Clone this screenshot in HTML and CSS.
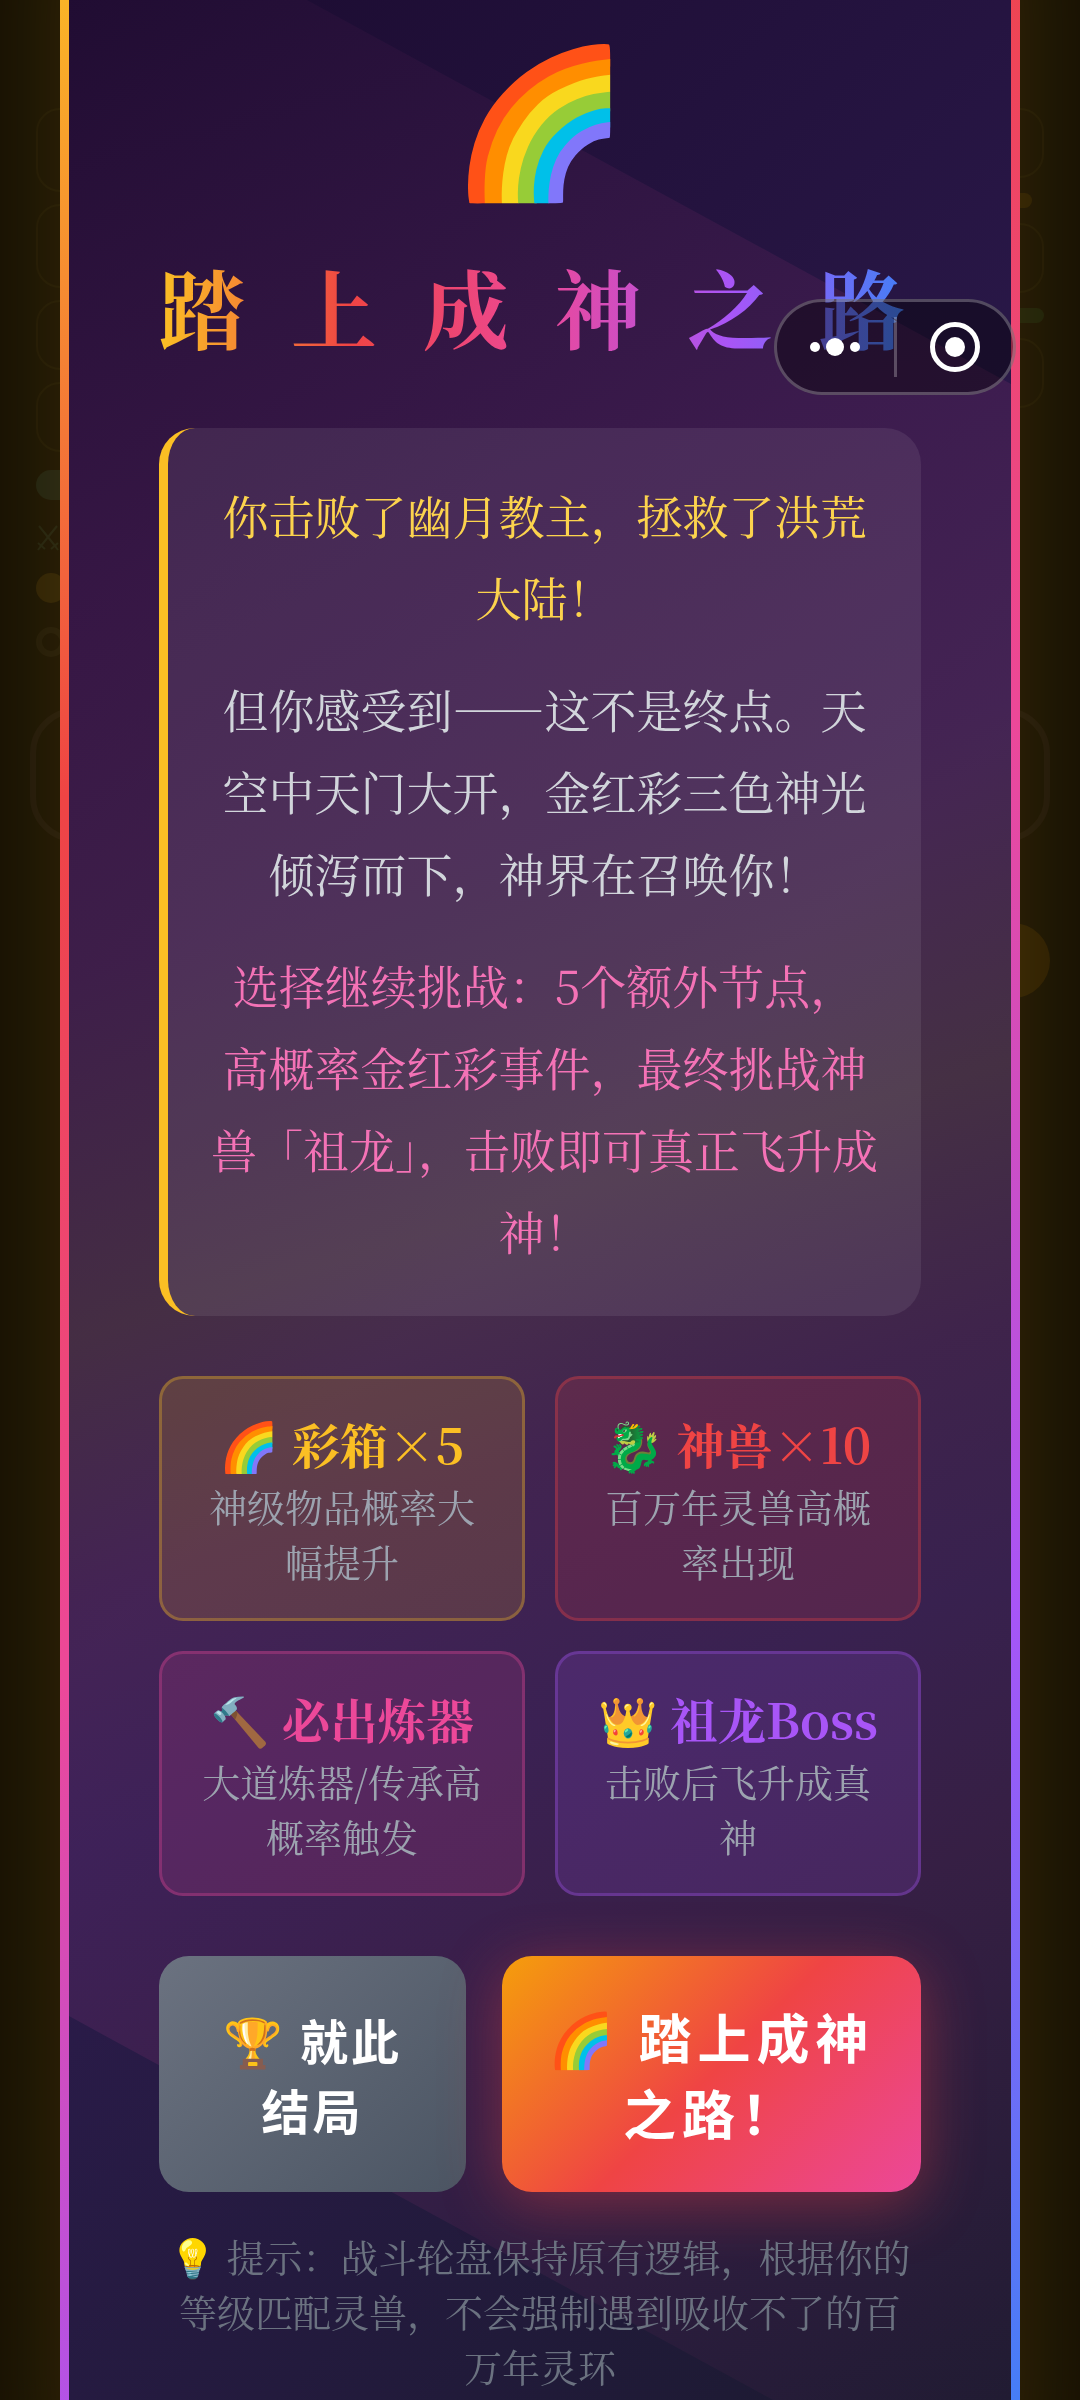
FILE: index.html
```html
<!DOCTYPE html>
<html lang="zh-CN">
<head>
    <meta charset="UTF-8">
    <meta name="viewport" content="width=device-width, initial-scale=1.0">
    <title>踏上成神之路</title>
    <link rel="stylesheet" href="styles.css">
</head>
<body>
<!-- 背景场景 -->
<div class="scene">
    <div class="scene-row">
        <div class="scene-col">
            <div class="slot slot-lg"></div>
            <div class="slot slot-lg"></div>
            <div class="slot"></div>
            <div class="slot"></div>
            <div class="dot dot-green"></div>
            <div class="swords">
                <svg viewBox="0 0 24 28" fill="none" stroke="currentColor" stroke-width="2">
                    <path d="M3 2l17 21M21 2L4 23M2 19l7 6M22 19l-7 6M5 22l-3 4M19 22l3 4"/>
                </svg>
            </div>
            <div class="dot dot-gold"></div>
            <div class="dot dot-ring"></div>
        </div>
        <div class="scene-col scene-right">
            <div class="slot"></div>
            <div class="bar bar-gold"></div>
            <div class="slot"></div>
            <div class="bar bar-green"></div>
            <div class="slot"></div>
        </div>
    </div>
    <div class="scene-card"></div>
    <div class="scene-ball"></div>
</div>

<!-- 弹窗 -->
<div class="overlay">
    <div class="modal">
        <div class="modal-icon">🌈</div>
        <h1 class="modal-title">踏上成神之路</h1>

        <div class="story">
            <p class="story-gold">你击败了幽月教主，拯救了洪荒大陆！</p>
            <p class="story-plain">但你感受到——这不是终点。天空中天门大开，金红彩三色神光倾泻而下，神界在召唤你！</p>
            <p class="story-pink">选择继续挑战：5个额外节点，高概率金红彩事件，最终挑战神兽「祖龙」，击败即可真正飞升成神！</p>
        </div>

        <div class="features">
            <div class="feature feature-gold">
                <h3>🌈 彩箱×5</h3>
                <p>神级物品概率大幅提升</p>
            </div>
            <div class="feature feature-red">
                <h3>🐉 神兽×10</h3>
                <p>百万年灵兽高概率出现</p>
            </div>
            <div class="feature feature-pink">
                <h3>🔨 必出炼器</h3>
                <p>大道炼器/传承高概率触发</p>
            </div>
            <div class="feature feature-purple">
                <h3>👑 祖龙Boss</h3>
                <p>击败后飞升成真神</p>
            </div>
        </div>

        <div class="actions">
            <button type="button" class="btn btn-end">🏆 就此结局</button>
            <button type="button" class="btn btn-go">🌈 踏上成神之路！</button>
        </div>

        <p class="hint">💡 提示：战斗轮盘保持原有逻辑，根据你的等级匹配灵兽，不会强制遇到吸收不了的百万年灵环</p>
    </div>
</div>

<!-- 小程序胶囊按钮 -->
<div class="capsule">
    <button type="button" class="capsule-btn" aria-label="更多">
        <svg width="52" height="20" viewBox="0 0 52 20" fill="#fff">
            <circle cx="6" cy="10" r="5"/>
            <circle cx="26" cy="10" r="9"/>
            <circle cx="46" cy="10" r="5"/>
        </svg>
    </button>
    <span class="capsule-line"></span>
    <button type="button" class="capsule-btn" aria-label="关闭">
        <svg width="52" height="52" viewBox="0 0 52 52">
            <circle cx="26" cy="26" r="22.5" fill="none" stroke="#fff" stroke-width="5"/>
            <circle cx="26" cy="26" r="10" fill="#fff"/>
        </svg>
    </button>
</div>
</body>
</html>
```

FILE: styles.css
```css
* {
    margin: 0;
    padding: 0;
    box-sizing: border-box;
}

body {
    min-height: 100vh;
    background: #1c1506;
    font-family: "Noto Serif CJK SC", "Noto Serif SC", "Noto Sans CJK SC", "Noto Color Emoji", serif;
    overflow: hidden;
}

/* 背景场景 */
.scene {
    min-height: 100vh;
    padding: 108px 30px 0;
}

.scene-row {
    display: flex;
    justify-content: space-between;
    padding: 0 6px;
    height: 600px;
}

.scene-col {
    display: flex;
    flex-direction: column;
    gap: 12px;
    width: 120px;
}

.scene-right {
    align-items: flex-end;
    gap: 15px;
}

.slot {
    width: 100%;
    height: 70px;
    border: 2px solid #2c240c;
    border-radius: 24px;
}

.slot-lg {
    height: 84px;
}

.dot {
    width: 30px;
    height: 30px;
    margin-bottom: 12px;
    border-radius: 50%;
}

.dot-green {
    width: 60px;
    margin-top: 6px;
    border-radius: 15px;
    background: #2b3a28;
}

.dot-gold {
    background: #4c380c;
}

.dot-ring {
    border: 6px solid #2f2714;
}

.swords {
    width: 24px;
    height: 28px;
    margin-bottom: 9px;
    color: #2f3a26;
}

.bar {
    width: 120px;
    height: 15px;
    border-radius: 9px;
}

.bar-gold {
    background: #463205;
    margin-right: 12px;
}

.bar-green {
    background: #243716;
}

.scene-card {
    height: 134px;
    border: 6px solid #2f2318;
    border-radius: 45px;
}

.scene-ball {
    width: 75px;
    height: 75px;
    margin: 81px 0 0 auto;
    border-radius: 50%;
    background: #4c3305;
}

/* 弹窗 */
.overlay {
    position: fixed;
    inset: 0;
    display: flex;
    align-items: center;
    justify-content: center;
    padding: 0 60px;
    overflow: hidden;
    background: rgba(20, 15, 3, .6);
}

.modal {
    position: relative;
    z-index: 0;
    flex: 1;
    min-width: 0;
    padding: 90px;
    overflow: hidden;
    text-align: center;
    border: 9px solid;
    border-image: linear-gradient(135deg, #fbbf24, #ef4444, #ec4899, #a855f7, #3b82f6) 1;
    background: linear-gradient(135deg, #1a0a2e, #2d1b4e 50%, #1a1a2e);
    box-shadow: 0 0 100px rgba(251, 191, 36, .15);
}

/* 斜向流光 */
.modal::before {
    content: "";
    position: absolute;
    z-index: -1;
    top: -50%;
    left: -50%;
    width: 200%;
    height: 200%;
    background: linear-gradient(45deg, rgba(236, 72, 153, 0) 20%, rgba(236, 72, 153, .1) 36%, rgba(236, 100, 130, .12) 43%, rgba(251, 191, 36, .13) 50%, rgba(236, 100, 130, .12) 55%, rgba(200, 80, 190, .12) 60%, rgba(236, 72, 153, .1) 65%, rgba(236, 72, 153, 0) 80%);
    transform: rotate(118.6deg);
}

.modal-icon {
    font-size: 144px;
    line-height: 206px;
    margin-bottom: 30px;
}

.modal-title {
    margin-bottom: 60px;
    font-size: 86px;
    line-height: 124px;
    letter-spacing: 46px;
    text-align: left;
    white-space: nowrap;
    color: transparent;
    background: linear-gradient(90deg, #fbbf24, #ef4444, #ec4899, #a855f7, #3b82f6);
    -webkit-background-clip: text;
    background-clip: text;
}

.story {
    margin-bottom: 60px;
    padding: 45px 42px;
    border-left: 9px solid #fbbf24;
    border-radius: 36px;
    background: rgba(255, 255, 255, .08);
    font-size: 46px;
    line-height: 82px;
}

.story p + p {
    margin-top: 30px;
}

.story-gold {
    color: #fcd34d;
}

.story-plain {
    color: #d1d5db;
}

.story-pink {
    color: #f472b6;
}

.features {
    display: grid;
    grid-template-columns: 1fr 1fr;
    gap: 30px;
    margin-bottom: 60px;
}

.feature {
    padding: 30px;
    border: 3px solid;
    border-radius: 24px;
}

.feature h3 {
    font-size: 48px;
    line-height: 69px;
    white-space: nowrap;
}

.feature p {
    font-size: 38px;
    line-height: 55px;
    color: #9ca3af;
}

.feature-gold {
    color: #fbbf24;
    border-color: rgba(251, 191, 36, .3);
    background: rgba(251, 191, 36, .15);
}

.feature-red {
    color: #ef4444;
    border-color: rgba(239, 68, 68, .3);
    background: rgba(239, 68, 68, .15);
}

.feature-pink {
    color: #ec4899;
    border-color: rgba(236, 72, 153, .3);
    background: rgba(236, 72, 153, .15);
}

.feature-purple {
    color: #a855f7;
    border-color: rgba(168, 85, 247, .3);
    background: rgba(168, 85, 247, .15);
}

.actions {
    display: grid;
    grid-template-columns: 11fr 15fr;
    gap: 36px;
    margin-bottom: 36px;
}

.btn {
    padding: 42px 36px;
    border: none;
    border-radius: 30px;
    color: #fff;
    font-family: "Noto Sans CJK SC", "Noto Color Emoji", sans-serif;
    font-weight: bold;
    cursor: pointer;
}

.btn-end {
    padding: 42px 54px;
    font-size: 48px;
    line-height: 70px;
    letter-spacing: 3px;
    background: linear-gradient(135deg, #6b7280, #4b5563);
}

.btn-go {
    font-size: 53px;
    line-height: 76px;
    letter-spacing: 6px;
    background: linear-gradient(135deg, #f59e0b, #ef4444, #ec4899);
    box-shadow: 0 12px 60px rgba(239, 68, 68, .4);
}

.hint {
    padding: 0 6px;
    font-size: 38px;
    line-height: 55px;
    color: #6b7280;
}

/* 胶囊按钮 */
.capsule {
    position: fixed;
    top: 299px;
    right: 64px;
    display: flex;
    align-items: center;
    width: 242px;
    height: 96px;
    border: 3px solid rgba(255, 255, 255, .25);
    border-radius: 48px;
    background: rgba(0, 0, 0, .4);
}

.capsule-btn {
    display: flex;
    flex: 1;
    align-items: center;
    justify-content: center;
    height: 100%;
    border: none;
    background: none;
    cursor: pointer;
}

.capsule-line {
    width: 3px;
    height: 60px;
    background: rgba(255, 255, 255, .25);
}
```
